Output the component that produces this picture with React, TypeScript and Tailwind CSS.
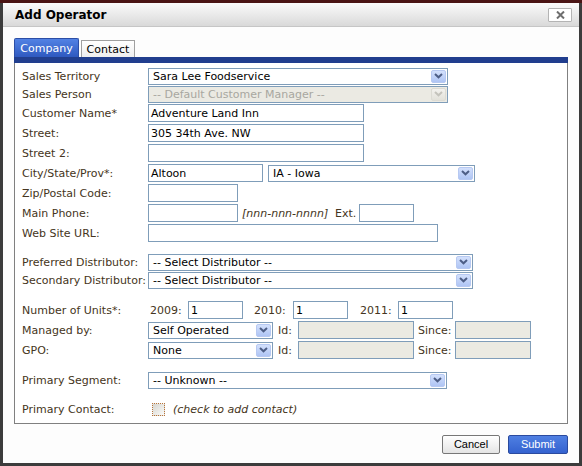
import React from "react";

const FONT = { fontFamily: '"DejaVu Sans", Verdana, sans-serif' };

function Arrow({ disabled }: { disabled?: boolean }) {
  return (
    <div
      className={
        disabled
          ? "absolute right-[1px] top-[1px] bottom-[1px] w-[15px] rounded-[2px] border border-[#dcdbd4] bg-linear-to-b from-[#f3f2ee] to-[#e2e1da] flex items-center justify-center"
          : "absolute right-[1px] top-[1px] bottom-[1px] w-[15px] rounded-[2px] border border-[#b7c9f2] bg-linear-to-b from-[#d3e0fc] to-[#afc5f4] flex items-center justify-center"
      }
    >
      <svg width="9" height="6" viewBox="0 0 9 6">
        <path
          d="M1 1 L4.5 4.3 L8 1"
          stroke={disabled ? "#c4c3bc" : "#4d5e86"}
          strokeWidth="2"
          fill="none"
        />
      </svg>
    </div>
  );
}

function Select({
  className,
  value,
  disabled,
}: {
  className: string;
  value: string;
  disabled?: boolean;
}) {
  return (
    <div
      className={
        "relative h-[17px] border border-[#7f9db9] flex items-center pl-[4px] whitespace-nowrap overflow-hidden " +
        (disabled ? "bg-[#ebeae3] text-[#a8a7a0] " : "bg-white text-black ") +
        className
      }
    >
      {value}
      <Arrow disabled={disabled} />
    </div>
  );
}

function Input({
  className,
  value,
  disabled,
}: {
  className: string;
  value?: string;
  disabled?: boolean;
}) {
  return (
    <div
      className={
        "h-[18px] border border-[#7f9db9] flex items-center pl-[2px] whitespace-nowrap text-black " +
        (disabled ? "bg-[#ebeae2] " : "bg-white ") +
        className
      }
    >
      {value}
    </div>
  );
}

function Label({ children }: { children: React.ReactNode }) {
  return <div className="w-[126px] shrink-0 whitespace-nowrap">{children}</div>;
}

export default function App() {
  return (
    <div
      className="w-[582px] h-[466px] bg-[#3c3c3c] border-t-[3px] border-t-[#4a1414] px-[3px] pb-[3px] overflow-hidden text-[11px] leading-none"
      style={FONT}
    >
      <div className="h-full bg-[#fdfdfd] flex flex-col">
        {/* Title bar */}
        <div className="h-[24px] shrink-0 flex items-center justify-between pl-[12px] pr-[7px] bg-linear-to-b from-[#fbfbfb] to-[#d9d9d9] border-b border-[#c6c6c6]">
          <div className="text-[12px] font-bold text-black">Add Operator</div>
          <div className="w-[24px] h-[14px] border border-[#b4b4b4] bg-white flex items-center justify-center rounded-[1px]">
            <svg width="9" height="8" viewBox="0 0 9 8">
              <path d="M1 0.5 L8 7.5 M8 0.5 L1 7.5" stroke="#6e6e6e" strokeWidth="2" />
            </svg>
          </div>
        </div>

        {/* Body */}
        <div className="flex-1 px-[11px] pt-[11px] flex flex-col">
          {/* Tabs */}
          <div className="flex items-end gap-[2px] h-[19px]">
            <div className="w-[65px] h-[19px] rounded-t-[2px] border border-b-0 border-[#2c4ea6] bg-linear-to-b from-[#5282e4] to-[#2f59c0] text-white flex items-center justify-center">
              Company
            </div>
            <div className="w-[54px] h-[17px] border border-b-0 border-[#a0a0a0] bg-linear-to-b from-[#ffffff] to-[#efefef] text-black flex items-center justify-center">
              Contact
            </div>
          </div>
          <div className="h-[6px] bg-[#213e8e]" />

          {/* Panel */}
          <div className="border-x border-b border-[#808080] bg-white pt-[4px] pl-[7px] pb-[5px] text-[#453521]">
            <div className="flex items-center h-[18px]">
              <Label>Sales Territory</Label>
              <Select className="w-[300px]" value="Sara Lee Foodservice" />
            </div>
            <div className="flex items-center h-[18px]">
              <Label>Sales Person</Label>
              <Select className="w-[300px]" value="-- Default Customer Manager --" disabled />
            </div>
            <div className="flex items-center h-[20px]">
              <Label>Customer Name*</Label>
              <Input className="w-[216px]" value="Adventure Land Inn" />
            </div>
            <div className="flex items-center h-[20px]">
              <Label>Street:</Label>
              <Input className="w-[216px]" value="305 34th Ave. NW" />
            </div>
            <div className="flex items-center h-[20px]">
              <Label>Street 2:</Label>
              <Input className="w-[216px]" />
            </div>
            <div className="flex items-center h-[20px]">
              <Label>City/State/Prov*:</Label>
              <Input className="w-[115px]" value="Altoon" />
              <Select className="w-[207px] ml-[5px]" value="IA - Iowa" />
            </div>
            <div className="flex items-center h-[20px]">
              <Label>Zip/Postal Code:</Label>
              <Input className="w-[90px]" />
            </div>
            <div className="flex items-center h-[20px]">
              <Label>Main Phone:</Label>
              <Input className="w-[90px]" />
              <div className="w-[97px] pl-[4px] italic whitespace-nowrap">[nnn-nnn-nnnn]</div>
              <div className="w-[24px] whitespace-nowrap">Ext.</div>
              <Input className="w-[55px]" />
            </div>
            <div className="flex items-center h-[20px]">
              <Label>Web Site URL:</Label>
              <Input className="w-[290px]" />
            </div>

            <div className="flex items-center h-[18px] mt-[10px]">
              <Label>Preferred Distributor:</Label>
              <Select className="w-[325px]" value="-- Select Distributor --" />
            </div>
            <div className="flex items-center h-[18px]">
              <Label>Secondary Distributor:</Label>
              <Select className="w-[325px]" value="-- Select Distributor --" />
            </div>

            <div className="flex items-center h-[20px] mt-[11px]">
              <Label>Number of Units*:</Label>
              <div className="w-[40px] pl-[2px]">2009:</div>
              <Input className="w-[55px]" value="1" />
              <div className="w-[50px] pl-[11px]">2010:</div>
              <Input className="w-[55px]" value="1" />
              <div className="w-[50px] pl-[12px]">2011:</div>
              <Input className="w-[55px]" value="1" />
            </div>
            <div className="flex items-center h-[20px]">
              <Label>Managed by:</Label>
              <Select className="w-[125px]" value="Self Operated" />
              <div className="w-[25px] pl-[5px]">Id:</div>
              <Input className="w-[116px]" disabled />
              <div className="w-[41px] pl-[4px]">Since:</div>
              <Input className="w-[76px]" disabled />
            </div>
            <div className="flex items-center h-[20px]">
              <Label>GPO:</Label>
              <Select className="w-[125px]" value="None" />
              <div className="w-[25px] pl-[5px]">Id:</div>
              <Input className="w-[116px]" disabled />
              <div className="w-[41px] pl-[4px]">Since:</div>
              <Input className="w-[76px]" disabled />
            </div>

            <div className="flex items-center h-[18px] mt-[11px]">
              <Label>Primary Segment:</Label>
              <Select className="w-[299px]" value="-- Unknown --" />
            </div>

            <div className="flex items-center h-[18px] mt-[11px]">
              <Label>Primary Contact:</Label>
              <div className="ml-[4px] w-[13px] h-[13px] border border-dotted border-[#b8743a] bg-linear-to-br from-[#d6d5cf] to-[#fbfbf9]" />
              <div className="ml-[8px] italic whitespace-nowrap">(check to add contact)</div>
            </div>
          </div>

          {/* Footer */}
          <div
            className="flex justify-end gap-[8px] mt-[11px] text-[11px]"
            style={{ fontFamily: '"Liberation Sans", Arial, sans-serif' }}
          >
            <div className="w-[58px] h-[19px] rounded-[2px] border border-[#777777] bg-linear-to-b from-[#ffffff] to-[#e4e4e4] text-black flex items-center justify-center">
              Cancel
            </div>
            <div className="w-[60px] h-[19px] rounded-[2px] border border-[#2a4a9e] bg-linear-to-b from-[#4f7fe2] to-[#3462cf] text-white flex items-center justify-center">
              Submit
            </div>
          </div>
        </div>
      </div>
    </div>
  );
}
